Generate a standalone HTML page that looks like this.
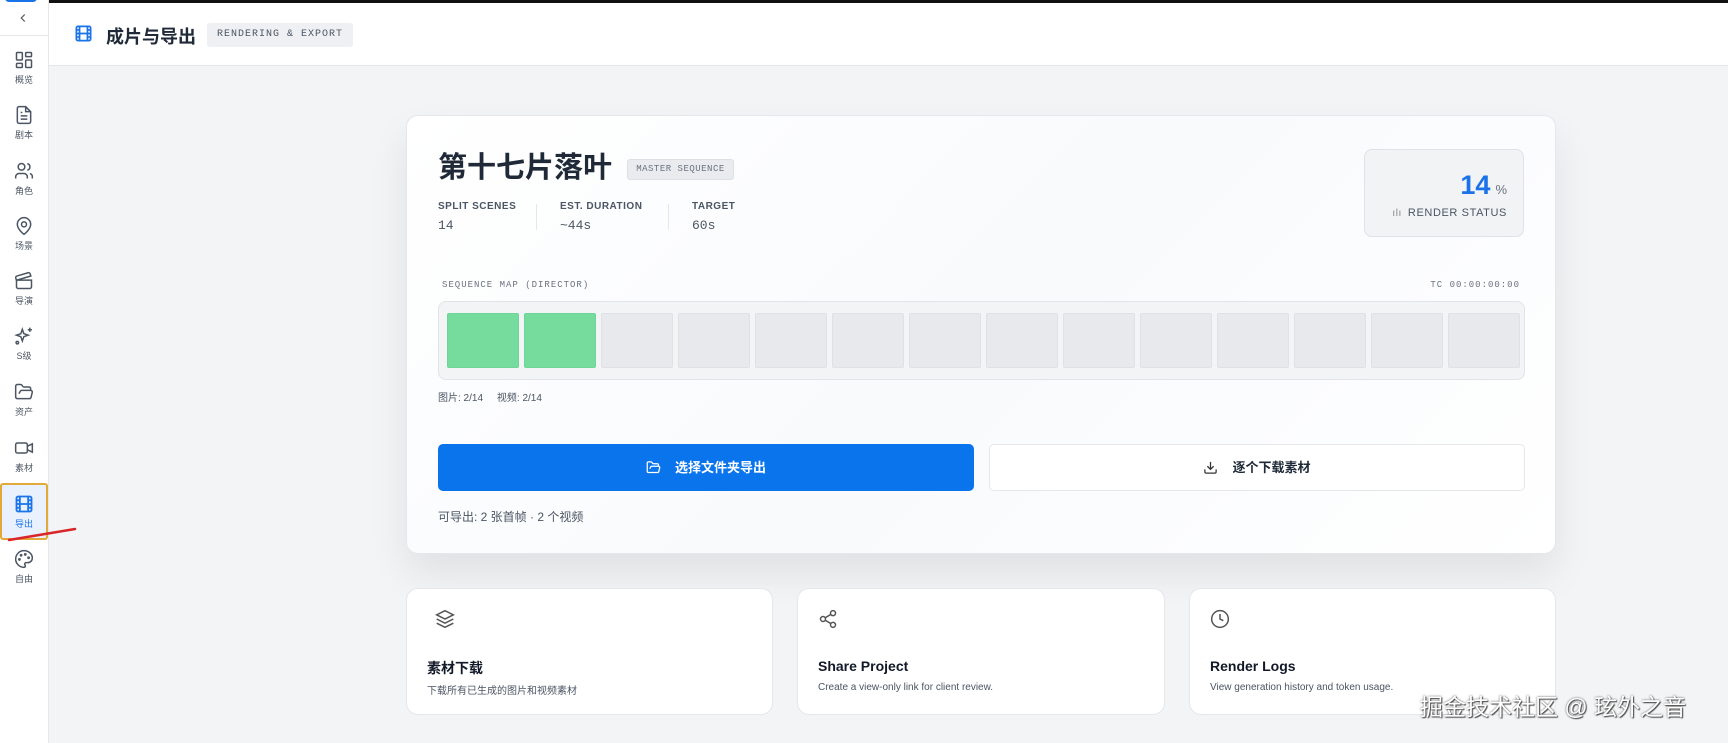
<!DOCTYPE html>
<html><head><meta charset="utf-8">
<style>
*{box-sizing:border-box;margin:0;padding:0}
body{width:1728px;height:743px;overflow:hidden;background:#f3f4f6;font-family:"Liberation Sans","Noto Sans CJK SC",sans-serif;color:#111827;position:relative}
.mono{font-family:"Liberation Mono","Noto Sans CJK SC",monospace}
.side{position:absolute;left:0;top:0;width:49px;height:743px;background:#fff;border-right:1px solid #e5e7eb}
.tab{position:absolute;left:5px;top:-6px;width:32px;height:8px;background:#1a73e8;border-radius:4px}
.item{position:absolute;left:0;width:48px;text-align:center;font-size:9px;color:#4b5563}
.item svg{display:block;margin:0 auto 3px}
.topbar{position:absolute;left:49px;top:0;right:0;height:3px;background:#111}
.header{position:absolute;left:49px;top:3px;right:0;height:63px;background:#fff;border-bottom:1px solid #e5e7eb}
.card{position:absolute;background:#fff;border:1px solid #e5e7eb;border-radius:12px}
.lbl{font-size:10px;letter-spacing:.5px;color:#4b5563;font-weight:bold}
.val{font-size:13px;color:#4b5563}
.cell{position:absolute;top:11px;width:72px;height:55px;background:#e8e9ec;border:1px solid #dfe1e5;border-radius:2px}
</style></head><body>
<div class="side">
 <div class="tab"></div>
 <svg style="position:absolute;left:16px;top:11px" width="14" height="14" viewBox="0 0 24 24" fill="none" stroke="#555" stroke-width="2"><path d="M15 6l-6 6 6 6"/></svg>
 <div style="position:absolute;left:0;top:35px;width:48px;border-top:1px solid #e5e7eb"></div>
 <div class="item" style="top:50px"><svg width="20" height="20" viewBox="0 0 24 24" fill="none" stroke="#4b5563" stroke-width="1.8"><rect x="3" y="3" width="7" height="9" rx="1"/><rect x="14" y="3" width="7" height="5" rx="1"/><rect x="14" y="12" width="7" height="9" rx="1"/><rect x="3" y="16" width="7" height="5" rx="1"/></svg>概览</div>
 <div class="item" style="top:105px"><svg width="20" height="20" viewBox="0 0 24 24" fill="none" stroke="#4b5563" stroke-width="1.8"><path d="M14 2H6a2 2 0 0 0-2 2v16a2 2 0 0 0 2 2h12a2 2 0 0 0 2-2V8z"/><path d="M14 2v6h6M8 13h8M8 17h8M8 9h2"/></svg>剧本</div>
 <div class="item" style="top:161px"><svg width="20" height="20" viewBox="0 0 24 24" fill="none" stroke="#4b5563" stroke-width="1.8"><circle cx="9" cy="7" r="4"/><path d="M2 21v-2a4 4 0 0 1 4-4h6a4 4 0 0 1 4 4v2M16 3.1a4 4 0 0 1 0 7.8M22 21v-2a4 4 0 0 0-3-3.9"/></svg>角色</div>
 <div class="item" style="top:216px"><svg width="20" height="20" viewBox="0 0 24 24" fill="none" stroke="#4b5563" stroke-width="1.8"><path d="M20 10c0 6-8 12-8 12s-8-6-8-12a8 8 0 0 1 16 0z"/><circle cx="12" cy="10" r="3"/></svg>场景</div>
 <div class="item" style="top:271px"><svg width="20" height="20" viewBox="0 0 24 24" fill="none" stroke="#4b5563" stroke-width="1.8"><path d="M20.2 6 3 11l-.9-2.4c-.3-1.1.3-2.2 1.3-2.5l13.5-4c1.1-.3 2.2.3 2.5 1.3z"/><path d="M3 11h18v8a2 2 0 0 1-2 2H5a2 2 0 0 1-2-2z"/></svg>导演</div>
 <div class="item" style="top:326px"><svg width="20" height="20" viewBox="0 0 24 24" fill="none" stroke="#4b5563" stroke-width="1.8"><path d="M10 4l1.8 5.2L17 11l-5.2 1.8L10 18l-1.8-5.2L3 11l5.2-1.8z"/><path d="M19 2v5M16.5 4.5h5"/><circle cx="4" cy="20" r="1.5"/></svg>S级</div>
 <div class="item" style="top:382px"><svg width="20" height="20" viewBox="0 0 24 24" fill="none" stroke="#4b5563" stroke-width="1.8"><path d="M6 14l1.5-2.9A2 2 0 0 1 9.2 10H20a2 2 0 0 1 1.9 2.5l-1.5 6A2 2 0 0 1 18.4 20H4a2 2 0 0 1-2-2V5a2 2 0 0 1 2-2h3.9a2 2 0 0 1 1.7.9l.8 1.2a2 2 0 0 0 1.7.9H18a2 2 0 0 1 2 2v2"/></svg>资产</div>
 <div class="item" style="top:438px"><svg width="20" height="20" viewBox="0 0 24 24" fill="none" stroke="#4b5563" stroke-width="1.8"><rect x="2" y="6" width="14" height="12" rx="2"/><path d="M16 10l6-3v10l-6-3"/></svg>素材</div>
 <div style="position:absolute;left:0;top:483px;width:48px;height:57px;background:#e8f1fd;border:2px solid #e2a93a;border-radius:3px"></div>
 <div class="item" style="top:494px;color:#1a73e8"><svg width="20" height="20" viewBox="0 0 24 24" fill="none" stroke="#1a73e8" stroke-width="2.2"><rect x="3" y="3" width="18" height="18" rx="2"/><path d="M7 3v18M17 3v18M3 12h18M3 7.5h4M3 16.5h4M17 7.5h4M17 16.5h4"/></svg>导出</div>
 <div class="item" style="top:549px"><svg width="20" height="20" viewBox="0 0 24 24" fill="none" stroke="#4b5563" stroke-width="1.8"><path d="M12 2C6.5 2 2 6.5 2 12s4.5 10 10 10c.9 0 1.6-.7 1.6-1.7 0-.4-.2-.8-.4-1.1-.3-.3-.4-.7-.4-1.1 0-.9.7-1.7 1.700-1.7h2c3 0 5.5-2.5 5.5-5.5C22 6 17.5 2 12 2z"/><circle cx="13.5" cy="6.5" r=".8"/><circle cx="17.5" cy="10.5" r=".8"/><circle cx="8.5" cy="7.5" r=".8"/><circle cx="6.5" cy="12.5" r=".8"/></svg>自由</div>
</div>
<svg style="position:absolute;left:0;top:520px" width="90" height="30"><path d="M9 20 L75 9" stroke="#d9262b" stroke-width="2.5" stroke-linecap="round"/></svg>
<div class="topbar"></div>
<div class="header">
 <svg style="position:absolute;left:25px;top:21px" width="19" height="19" viewBox="0 0 24 24" fill="none" stroke="#1a73e8" stroke-width="2.2"><rect x="3" y="3" width="18" height="18" rx="2"/><path d="M7 3v18M17 3v18M3 12h18M3 7.5h4M3 16.5h4M17 7.5h4M17 16.5h4"/></svg>
 <div style="position:absolute;left:57px;top:20px;font-size:18px;font-weight:bold;color:#1f2937">成片与导出</div>
 <div class="mono" style="position:absolute;left:158px;top:20px;width:146px;height:24px;background:#eef0f3;border-radius:3px;font-size:10px;line-height:24px;text-align:center;letter-spacing:1px;color:#4b5563">RENDERING &amp; EXPORT</div>
</div>
<div class="card" style="left:406px;top:115px;width:1150px;height:439px;box-shadow:0 20px 40px rgba(0,0,0,.08);background:linear-gradient(135deg,#fff,#f8fafc 50%,#fff)">
 <div style="position:absolute;left:31px;top:34px;font-size:29px;line-height:36px;font-weight:bold;color:#1f2937">第十七片落叶</div>
 <div style="position:absolute;left:220px;top:43px;width:107px;height:21px;background:#e9ebee;border:1px solid #dde0e4;border-radius:3px;font-size:9px;line-height:19px;text-align:center;color:#6b7280;letter-spacing:.5px" class="mono">MASTER SEQUENCE</div>
 <div style="position:absolute;left:31px;top:85px"><div class="lbl">SPLIT SCENES</div><div class="val mono" style="margin-top:6px">14</div></div>
 <div style="position:absolute;left:129px;top:88px;height:26px;border-left:1px solid #e5e7eb"></div>
 <div style="position:absolute;left:153px;top:85px"><div class="lbl">EST. DURATION</div><div class="val mono" style="margin-top:6px">~44s</div></div>
 <div style="position:absolute;left:261px;top:88px;height:26px;border-left:1px solid #e5e7eb"></div>
 <div style="position:absolute;left:285px;top:85px"><div class="lbl">TARGET</div><div class="val mono" style="margin-top:6px">60s</div></div>
 <div style="position:absolute;left:957px;top:33px;width:160px;height:88px;background:#f1f3f5;border:1px solid #dfe2e6;border-radius:8px">
  <div style="position:absolute;right:16px;top:20px;font-size:27px;font-weight:bold;color:#1a73e8">14<span style="font-size:13px;color:#6b7280;font-weight:normal;margin-left:5px">%</span></div>
  <div style="position:absolute;right:16px;top:57px;font-size:11px;color:#4b5563;letter-spacing:.6px"><span style="font-size:10px;color:#888;margin-right:6px">ılı</span>RENDER STATUS</div>
 </div>
 <div class="mono" style="position:absolute;left:35px;top:164px;font-size:9px;color:#6b7280;letter-spacing:1px">SEQUENCE MAP (DIRECTOR)</div>
 <div class="mono" style="position:absolute;right:35px;top:164px;font-size:9px;color:#6b7280;letter-spacing:1px">TC 00:00:00:00</div>
 <div style="position:absolute;left:31px;top:185px;width:1087px;height:79px;background:#f3f4f6;border:1px solid #e0e3e7;border-radius:8px">
  <div class="cell" style="left:8px;background:#76dc9e;border-color:#6fd498"></div>
  <div class="cell" style="left:85px;background:#76dc9e;border-color:#6fd498"></div>
  <div class="cell" style="left:162px"></div><div class="cell" style="left:239px"></div><div class="cell" style="left:316px"></div><div class="cell" style="left:393px"></div><div class="cell" style="left:470px"></div><div class="cell" style="left:547px"></div><div class="cell" style="left:624px"></div><div class="cell" style="left:701px"></div><div class="cell" style="left:778px"></div><div class="cell" style="left:855px"></div><div class="cell" style="left:932px"></div><div class="cell" style="left:1009px"></div>
 </div>
 <div style="position:absolute;left:31px;top:273px;font-size:10px;color:#4b5563">图片: 2/14 &nbsp;&nbsp;&nbsp; 视频: 2/14</div>
 <div style="position:absolute;left:31px;top:328px;width:536px;height:47px;background:#0a74ec;border-radius:5px;color:#fff;font-size:13px;font-weight:bold;text-align:center;line-height:47px"><svg style="vertical-align:-3px;margin-right:14px" width="15" height="15" viewBox="0 0 24 24" fill="none" stroke="#fff" stroke-width="2"><path d="M6 14l1.5-2.9A2 2 0 0 1 9.2 10H20a2 2 0 0 1 1.9 2.5l-1.5 6A2 2 0 0 1 18.4 20H4a2 2 0 0 1-2-2V5a2 2 0 0 1 2-2h3.9a2 2 0 0 1 1.7.9l.8 1.2a2 2 0 0 0 1.7.9H18a2 2 0 0 1 2 2v2"/></svg>选择文件夹导出</div>
 <div style="position:absolute;left:582px;top:328px;width:536px;height:47px;background:#fff;border:1px solid #e5e7eb;border-radius:5px;color:#1f2937;font-size:13px;font-weight:bold;text-align:center;line-height:45px"><svg style="vertical-align:-3px;margin-right:14px" width="15" height="15" viewBox="0 0 24 24" fill="none" stroke="#333" stroke-width="2"><path d="M21 15v4a2 2 0 0 1-2 2H5a2 2 0 0 1-2-2v-4M7 10l5 5 5-5M12 15V3"/></svg>逐个下载素材</div>
 <div style="position:absolute;left:31px;top:392px;font-size:12px;color:#4b5563">可导出: 2 张首帧 · 2 个视频</div>
</div>
<div class="card" style="left:406px;top:588px;width:367px;height:127px">
 <svg style="position:absolute;left:28px;top:20px" width="20" height="20" viewBox="0 0 24 24" fill="none" stroke="#555" stroke-width="1.8"><path d="M12 2 2 7l10 5 10-5z"/><path d="m2 17 10 5 10-5M2 12l10 5 10-5"/></svg>
 <div style="position:absolute;left:20px;top:69px;font-size:14px;font-weight:bold">素材下载</div>
 <div style="position:absolute;left:20px;top:93px;font-size:10px;color:#4b5563">下载所有已生成的图片和视频素材</div>
</div>
<div class="card" style="left:797px;top:588px;width:368px;height:127px">
 <svg style="position:absolute;left:20px;top:20px" width="20" height="20" viewBox="0 0 24 24" fill="none" stroke="#555" stroke-width="1.8"><circle cx="18" cy="5" r="3"/><circle cx="6" cy="12" r="3"/><circle cx="18" cy="19" r="3"/><path d="m8.6 13.5 6.8 4M15.4 6.5l-6.8 4"/></svg>
 <div style="position:absolute;left:20px;top:69px;font-size:14px;font-weight:bold">Share Project</div>
 <div style="position:absolute;left:20px;top:93px;font-size:10px;color:#4b5563">Create a view-only link for client review.</div>
</div>
<div class="card" style="left:1189px;top:588px;width:367px;height:127px">
 <svg style="position:absolute;left:20px;top:20px" width="20" height="20" viewBox="0 0 24 24" fill="none" stroke="#555" stroke-width="1.8"><circle cx="12" cy="12" r="10"/><path d="M12 6v6l4 2"/></svg>
 <div style="position:absolute;left:20px;top:69px;font-size:14px;font-weight:bold">Render Logs</div>
 <div style="position:absolute;left:20px;top:93px;font-size:10px;color:#4b5563">View generation history and token usage.</div>
</div>
<div style="position:absolute;left:1420px;top:688px;font-size:23px;color:#fff;text-shadow:0 0 2px #555,1px 1px 1px #444">掘金技术社区 @ 玹外之音</div>
</body></html>
